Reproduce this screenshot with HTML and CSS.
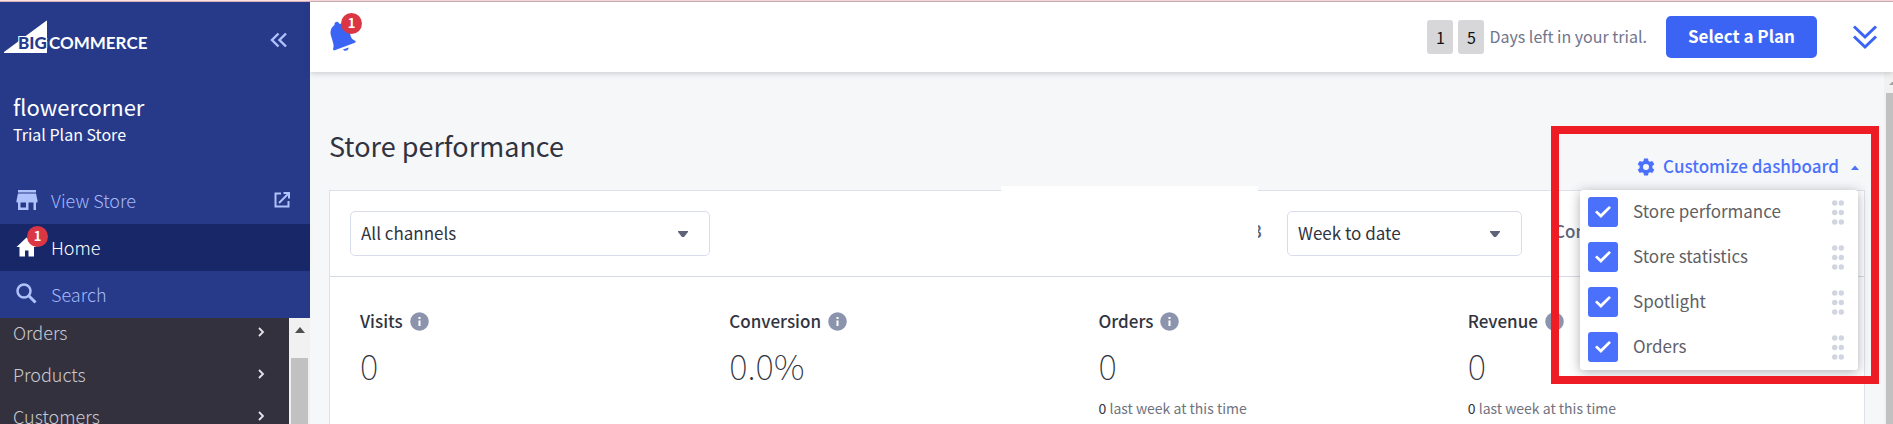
FILE: index.html
```html
<!DOCTYPE html>
<html lang="en">
<head>
<meta charset="utf-8">
<meta name="viewport" content="width=device-width, initial-scale=1">
<title>flowercorner dashboard</title>
<link rel="stylesheet" href="styles.css">
</head>
<body>
<div class="app">
  <aside class="sidebar">
    <div class="brand-row">
      <a class="brand" href="#" aria-label="BigCommerce">
        <svg class="brand-logo" width="150" height="36" viewBox="0 0 150 36">
          <path d="M4 33 46 2q1-1 1 0v32H4z" fill="#fff"/>
          <text class="logo-big" x="18" y="30">BIG</text>
          <text class="logo-commerce" x="49" y="30">COMMERCE</text>
        </svg>
      </a>
      <button class="icon-button collapse" type="button" aria-label="Collapse menu">
        <svg width="18" height="16" viewBox="0 0 18 16" fill="none" stroke="#b0c2fb" stroke-width="2.400"><path d="M8.500 1.500 2 8l6.500 6.500M16 1.500 9.500 8l6.500 6.500"/></svg>
      </button>
    </div>
    <div class="store">
      <p class="store-name">flowercorner</p>
      <p class="store-plan">Trial Plan Store</p>
    </div>
    <nav class="primary-nav">
      <a class="nav-link" href="#">
        <svg class="nav-icon" width="22" height="22" viewBox="0 0 22 22" fill="#b0c2fb"><path d="M2 1h18v2.500H2zM2 4.500h18l1.500 7v2H20V21h-2.500v-7.500h-5V21H2v-7.500H.5v-2zM4.500 13.500v5H10v-5z" fill-rule="evenodd"/></svg>
        <span>View Store</span>
        <svg class="external" width="16" height="16" viewBox="0 0 16 16" fill="none" stroke="#b0c2fb" stroke-width="2"><path d="M7 1.500H1.500v13h13V9M9.500 1H15v5.500M14.500 1.500 5 11"/></svg>
      </a>
      <a class="nav-link nav-link-active" href="#">
        <svg class="nav-icon" width="22" height="22" viewBox="0 0 22 22" fill="#fff"><path d="M10.500 1.500.5 11h3v9.500h5.500v-6h3.500v6H18V11h2.500z"/></svg>
        <span>Home</span>
        <span class="badge badge-home">1</span>
      </a>
      <a class="nav-link" href="#">
        <svg class="nav-icon" width="22" height="22" viewBox="0 0 22 22" fill="none" stroke="#b0c2fb"><circle cx="8" cy="8" r="6.500" stroke-width="2.500"/><path d="m12.500 12.500 7 7" stroke-width="3"/></svg>
        <span>Search</span>
      </a>
    </nav>
    <div class="catalog">
      <ul class="catalog-list">
        <li><a class="catalog-link" href="#">Orders<svg width="8" height="12" viewBox="0 0 8 12" fill="none" stroke="#e4e4ea" stroke-width="1.800"><path d="m2 2 4 4-4 4"/></svg></a></li>
        <li><a class="catalog-link" href="#">Products<svg width="8" height="12" viewBox="0 0 8 12" fill="none" stroke="#e4e4ea" stroke-width="1.800"><path d="m2 2 4 4-4 4"/></svg></a></li>
        <li><a class="catalog-link" href="#">Customers<svg width="8" height="12" viewBox="0 0 8 12" fill="none" stroke="#e4e4ea" stroke-width="1.800"><path d="m2 2 4 4-4 4"/></svg></a></li>
      </ul>
      <div class="side-scroll">
        <svg width="10" height="6" viewBox="0 0 10 6"><path d="M0 6 5 0l5 6z" fill="#505050"/></svg>
        <div class="side-thumb"></div>
      </div>
    </div>
  </aside>

  <div class="workspace">
    <header class="topbar">
      <button class="icon-button bell" type="button" aria-label="Notifications">
        <svg width="28" height="32" viewBox="0 0 28 32" fill="#3c64f4"><path d="M4.500 3.500C4.500 1.500 6 .5 7.500 1S9 2 9.500 3c5-1 8.500 2 9.500 6l2 7c1 2.500 2.500 3 4.500 4v1.500L4 29.500l-1-1c.5-2 1-4 0-7L.8 14C-.2 9.500 1.500 6 4.500 4zM13 28.500l5.500-2c.5 3-4 4.500-5.500 2z"/></svg>
        <span class="badge badge-bell">1</span>
      </button>
      <div class="trial">
        <span class="digit">1</span>
        <span class="digit">5</span>
        <span class="trial-text">Days left in your trial.</span>
      </div>
      <button class="plan-button" type="button">Select a Plan</button>
      <button class="icon-button expand" type="button" aria-label="Expand">
        <svg width="26" height="26" viewBox="0 0 26 26" fill="none" stroke="#3c64f4" stroke-width="3"><path d="M2 2.500 13 13 24 2.500M2 12.500 13 23l11-10.500"/></svg>
      </button>
    </header>

    <div class="scroll-area">
      <main class="content">
        <div class="title-row">
          <h1 class="title">Store performance</h1>
          <div class="customize">
            <button class="customize-button" type="button" aria-expanded="true">
              <svg width="18" height="18" viewBox="0 0 18 18" fill="#4b71fc"><path fill-rule="evenodd" d="M7 .5h4l.5 2.500 1.500.8 2.300-.9 2 3.300-1.900 1.700v2.200l1.900 1.700-2 3.300-2.300-.9-1.500.8-.5 2.500H7l-.5-2.500-1.500-.8-2.300.9-2-3.300 1.900-1.700V7.900L.7 6.200l2-3.300 2.300.9L6.500 3zM9 6a3 3 0 1 0 0 6 3 3 0 0 0 0-6z"/></svg>
              <span class="customize-label">Customize dashboard</span>
              <svg class="up" width="8" height="5" viewBox="0 0 8 5" fill="#4b71fc"><path d="m0 5 4-4.500L8 5z"/></svg>
            </button>
            <div class="menu">
              <label class="menu-row"><input class="check" type="checkbox" checked><span class="menu-label">Store performance</span><svg class="grip" width="12" height="25" viewBox="0 0 12 25"><use href="#dots"/></svg></label>
              <label class="menu-row"><input class="check" type="checkbox" checked><span class="menu-label">Store statistics</span><svg class="grip" width="12" height="25" viewBox="0 0 12 25"><use href="#dots"/></svg></label>
              <label class="menu-row"><input class="check" type="checkbox" checked><span class="menu-label">Spotlight</span><svg class="grip" width="12" height="25" viewBox="0 0 12 25"><use href="#dots"/></svg></label>
              <label class="menu-row"><input class="check" type="checkbox" checked><span class="menu-label">Orders</span><svg class="grip" width="12" height="25" viewBox="0 0 12 25"><use href="#dots"/></svg></label>
            </div>
            <div class="highlight"></div>
          </div>
        </div>

        <section class="card">
          <div class="filters">
            <div class="select-box select-channel">
              <select class="select" aria-label="Channel"><option>All channels</option></select>
              <svg class="caret" width="10" height="6" viewBox="0 0 10 6" fill="#5e637a"><path d="M0 0h10v1L6 6H4L0 1z"/></svg>
            </div>
            <span class="range">3</span>
            <div class="select-box select-period">
              <select class="select" aria-label="Period"><option>Week to date</option></select>
              <svg class="caret" width="10" height="6" viewBox="0 0 10 6" fill="#5e637a"><path d="M0 0h10v1L6 6H4L0 1z"/></svg>
            </div>
            <span class="compare">Compare to</span>
            <div class="patch"></div>
          </div>
          <div class="metrics">
            <div class="metric">
              <h2 class="metric-name">Visits <svg class="info" width="19" height="19" viewBox="0 0 19 19"><use href="#info"/></svg></h2>
              <p class="metric-value">0</p>
            </div>
            <div class="metric">
              <h2 class="metric-name">Conversion <svg class="info" width="19" height="19" viewBox="0 0 19 19"><use href="#info"/></svg></h2>
              <p class="metric-value">0.0%</p>
            </div>
            <div class="metric">
              <h2 class="metric-name">Orders <svg class="info" width="19" height="19" viewBox="0 0 19 19"><use href="#info"/></svg></h2>
              <p class="metric-value">0</p>
              <p class="metric-note"><span class="metric-count">0</span> last week at this time</p>
            </div>
            <div class="metric">
              <h2 class="metric-name">Revenue <svg class="info" width="19" height="19" viewBox="0 0 19 19"><use href="#info"/></svg></h2>
              <p class="metric-value">0</p>
              <p class="metric-note"><span class="metric-count">0</span> last week at this time</p>
            </div>
          </div>
        </section>
      </main>
      <div class="page-scroll">
        <svg width="4" height="3" viewBox="0 0 4 3"><path d="M0 3 3 0h1v3z" fill="#a3a3a3"/></svg>
        <div class="page-thumb"></div>
      </div>
    </div>
  </div>
</div>
<svg class="defs" width="0" height="0" aria-hidden="true">
  <defs>
    <g id="dots" fill="#d1d5e0"><circle cx="2.700" cy="3" r="2.700"/><circle cx="9.300" cy="3" r="2.700"/><circle cx="2.700" cy="12.500" r="2.700"/><circle cx="9.300" cy="12.500" r="2.700"/><circle cx="2.700" cy="22" r="2.700"/><circle cx="9.300" cy="22" r="2.700"/></g>
    <g id="info"><circle cx="9.500" cy="9.500" r="9.300" fill="#8c93ad"/><path d="M8.500 5h2v2h-2zM8.500 8.500h2v5.500h-2z" fill="#fff"/></g>
  </defs>
</svg>
</body>
</html>
```
FILE: styles.css
```css
* { box-sizing: border-box; }

body {
  margin: 0;
  height: 100vh;
  overflow: hidden;
  font-family: "Noto Sans CJK SC", "Open Sans", sans-serif;
  font-size: 17px;
  line-height: 24px;
  color: #313440;
  background: #f6f7f9;
}

h1, h2, p, ul { margin: 0; padding: 0; font-weight: 400; }
ul { list-style: none; }
a { text-decoration: none; }
button, select, input { font: inherit; margin: 0; }

.app {
  display: flex;
  height: 100%;
  border-top: 1px solid #ffdfe2;
  box-shadow: inset 0 1px 0 #d5b3ba;
  padding-top: 1px;
}

.icon-button {
  display: flex;
  padding: 0;
  border: 0;
  background: none;
}

/* Sidebar */
.sidebar {
  display: flex;
  flex-direction: column;
  flex: 0 0 310px;
  background: #273a8a;
  overflow: hidden;
}

.brand-row {
  display: flex;
  align-items: center;
  justify-content: space-between;
  padding: 17px 22px 0 0;
}
.brand, .brand-logo { display: block; }
.collapse { padding-top: 6px; }
.logo-big, .logo-commerce {
  font-family: Lato, sans-serif;
  font-size: 17px;
  font-weight: 700;
}
.logo-big { fill: #273a8a; stroke: #fff; stroke-width: 2px; paint-order: stroke; font-weight: 900; }
.logo-commerce { fill: #fff; }

.store { padding: 35px 13px 0; color: #fff; }
.store-name { font-size: 22px; line-height: 32px; }
.store-plan { font-size: 16px; line-height: 24px; }

.primary-nav { padding-top: 31px; }
.nav-link {
  position: relative;
  display: flex;
  align-items: center;
  gap: 13px;
  height: 47px;
  padding: 0 20px 2px 16px;
  color: #a5b8f8;
  font-size: 18px;
  font-weight: 300;
}
.nav-link-active { background: #182767; color: #fff; }
.external { margin-left: auto; }

.badge {
  position: absolute;
  width: 21px;
  height: 21px;
  border-radius: 50%;
  background: #db3643;
  color: #fff;
  font-size: 13px;
  font-weight: 700;
  line-height: 20px;
  text-align: center;
}
.badge-home { left: 27px; top: 2px; }
.badge-bell { left: 11px; top: -8px; }

.catalog {
  display: flex;
  flex: 1;
  min-height: 0;
  overflow: hidden;
  background: #34313f;
}
.catalog-list { flex: 1; margin-top: -7px; }
.catalog-link {
  display: flex;
  align-items: center;
  justify-content: space-between;
  height: 42px;
  padding: 0 24px 0 13px;
  color: #c9c9d0;
  font-size: 18px;
  font-weight: 300;
}
.side-scroll {
  display: flex;
  flex-direction: column;
  align-items: center;
  gap: 25px;
  width: 21px;
  padding-top: 9px;
  background: #f1f1f1;
}
.side-thumb { flex: 1; width: 17px; background: #c1c1c1; }

/* Top bar */
.workspace { display: flex; flex: 1; flex-direction: column; min-width: 0; }
.topbar {
  position: relative;
  z-index: 1;
  display: flex;
  flex: 0 0 70px;
  align-items: center;
  padding: 0 15px 0 20px;
  background: #fff;
  box-shadow: 0 1px 6px rgba(49, 52, 64, 0.25);
}
.bell { position: relative; }
.trial { display: flex; align-items: center; gap: 5px; margin-left: auto; }
.digit {
  width: 26px;
  height: 34px;
  border-radius: 3px;
  background: #d7d7d9;
  font-size: 16px;
  line-height: 34px;
  text-align: center;
  color: #111;
}
.trial-text { padding-bottom: 2px; font-size: 16px; color: #70758c; }
.plan-button {
  height: 42px;
  margin: 0 35px 0 19px;
  padding: 0 22px 2px;
  border: 0;
  border-radius: 5px;
  background: #3c64f4;
  color: #fff;
  font-weight: 700;
}

/* Dashboard */
.scroll-area { display: flex; flex: 1; min-height: 0; overflow: hidden; }
.content { flex: 1; min-width: 0; padding: 0 19px; }
.title-row { display: flex; align-items: flex-end; justify-content: space-between; height: 118px; }
.title { padding-bottom: 24px; font-size: 27px; line-height: 40px; }

.customize { position: relative; z-index: 2; }
.customize-button {
  display: flex;
  align-items: center;
  gap: 8px;
  height: 46px;
  padding: 0 6px;
  border: 0;
  background: none;
  color: #4b71fc;
  font-weight: 500;
}
.customize-label, .menu-label { padding-bottom: 2px; }
.up { margin-left: 4px; }
.menu {
  position: absolute;
  top: 100%;
  right: 7px;
  width: 278px;
  border-radius: 3px;
  background: #fff;
  box-shadow: 0 2px 12px rgba(49, 52, 64, 0.4);
}
.menu-row {
  display: flex;
  align-items: center;
  gap: 15px;
  height: 45px;
  padding: 0 14px 1px 8px;
  color: #5f5f66;
}
.grip { margin-left: auto; }
.check {
  appearance: none;
  display: grid;
  place-items: center;
  width: 30px;
  height: 30px;
  border-radius: 3px;
  background: #4b71fc;
}
.check:checked::before {
  content: "";
  width: 16px;
  height: 12px;
  background: #fff;
  clip-path: polygon(0 52%, 12% 38%, 36% 66%, 88% 0, 100% 14%, 37% 100%);
}
.highlight {
  position: absolute;
  top: -18px;
  right: -14px;
  width: 328px;
  height: 258px;
  border: 8px solid #ee1c24;
  pointer-events: none;
}

.card { min-height: 240px; border: 1px solid #dfe1ea; background: #fff; }
.filters {
  position: relative;
  display: flex;
  align-items: center;
  padding: 20px;
  border-bottom: 1px solid #d5d9e8;
}
.select-box { position: relative; }
.select-channel { width: 360px; margin-right: auto; }
.select-period { width: 235px; margin: 0 32px 0 25px; }
.select {
  appearance: none;
  display: block;
  width: 100%;
  height: 45px;
  padding: 0 10px 2px;
  border: 1px solid #d9dcec;
  border-radius: 5px;
  background: #fff;
  color: #313440;
}
.caret { position: absolute; right: 22px; top: 20px; pointer-events: none; }
.range, .compare { padding-bottom: 6px; font-weight: 500; color: #5e637a; }
.compare { width: 290px; }
.patch {
  position: absolute;
  top: -5px;
  right: 606px;
  width: 257px;
  height: 80px;
  background: #fff;
}

.metrics { display: grid; grid-template-columns: repeat(4, 1fr); padding: 31px 27px 31px 30px; }
.metric-name { display: flex; align-items: center; gap: 7px; font-size: 17px; line-height: 26px; font-weight: 500; }
.metric-value { font-size: 35px; line-height: 62px; font-weight: 100; }
.metric-note { font-size: 14px; line-height: 24px; color: #70737e; }
.metric-count { color: #313440; }

.page-scroll {
  display: flex;
  flex-direction: column;
  align-items: flex-end;
  gap: 8px;
  width: 9px;
  padding-top: 10px;
  background: #f1f1f1;
}
.page-thumb { flex: 1; width: 7px; background: #c1c1c1; }
.defs { position: absolute; }
```
